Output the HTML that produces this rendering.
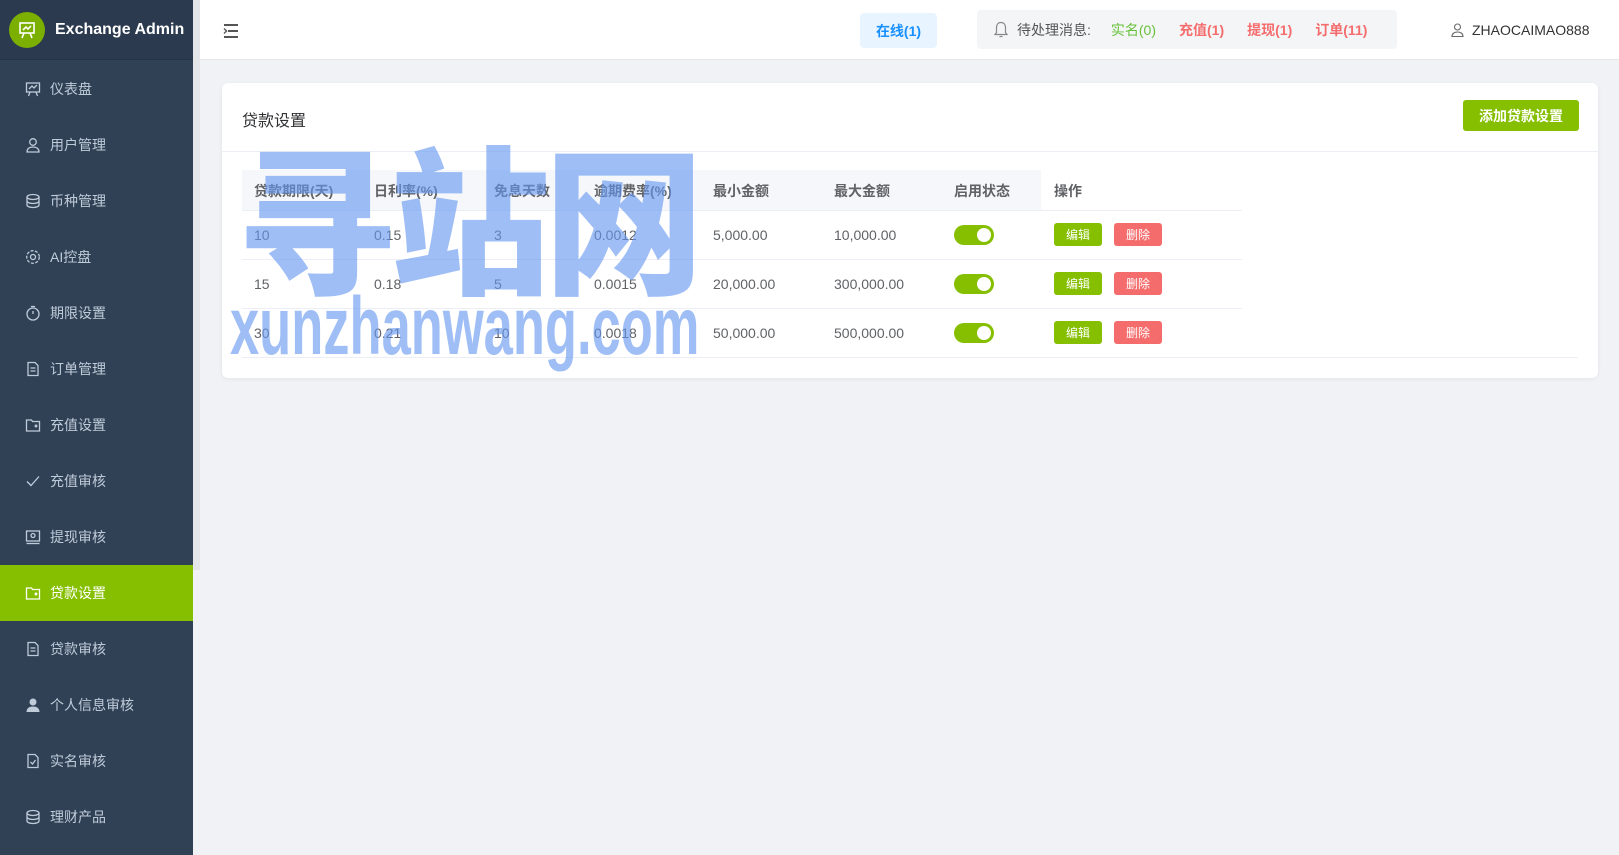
<!DOCTYPE html><html><head><meta charset="utf-8"><style>
*{margin:0;padding:0;box-sizing:border-box}
body{width:1619px;height:855px;overflow:hidden;background:#f0f2f5;font-family:"Liberation Sans","Noto Sans CJK SC",sans-serif;position:relative;font-size:14px;color:#606266}
.side{position:absolute;left:0;top:0;width:193px;height:855px;background:#304156}
.sb{position:absolute;left:193px;top:0;width:7px;height:570px;background:#e4e6ea}
.logo{height:60px;background:#2b3a4e;display:flex;align-items:center;padding-left:9px;border-bottom:1px solid #263344}
.logo .c{width:36px;height:36px;border-radius:50%;background:#7cb000;display:flex;align-items:center;justify-content:center}
.logo b{color:#fff;font-size:16px;margin-left:10px}
.it{position:absolute;left:0;width:193px;height:56px;display:flex;align-items:center;padding-left:25px;color:#bfcbd9;font-size:14px}
.it svg{margin-right:9px}
.it.a{background:#85bf00;color:#fff}
.hd{position:absolute;left:200px;top:0;width:1419px;height:60px;background:#fff;border-bottom:1px solid #e6e6e6}
.card{position:absolute;left:222px;top:83px;width:1376px;height:295px;background:#fff;border-radius:6px;box-shadow:0 1px 4px rgba(0,0,0,.06)}
.th{position:absolute;top:87px;height:40px;background:#f5f7fa}
.cell{position:absolute;font-size:14px}
.hl{position:absolute;height:1px;background:#ebeef5}
.sw{position:absolute;width:40px;height:20px;border-radius:10px;background:#85bf00}
.sw:after{content:"";position:absolute;right:3px;top:3px;width:14px;height:14px;border-radius:50%;background:#fff}
.bt{position:absolute;width:48px;height:23px;border-radius:3px;color:#fff;font-size:12px;display:flex;align-items:center;justify-content:center}
.wm{position:absolute;color:rgba(100,150,240,.62);font-weight:bold;pointer-events:none;white-space:nowrap}
</style></head><body>
<div class="side">
<div class="logo"><div class="c"><svg width="20" height="20" viewBox="0 0 20 20" fill="none" stroke="#fff" stroke-width="1.6"><rect x="3" y="3" width="14" height="10"/><path d="M6 10l3-3 2 2 3-3M7 13l-2 5M13 13l2 5"/></svg></div><b>Exchange Admin</b></div>
</div>
<div class="sb"></div>
<div class="it" style="top:61px"><svg width="16" height="16" viewBox="0 0 16 16" fill="none" stroke="#bfcbd9" stroke-width="1.3"><rect x="1.5" y="2" width="13" height="9"/><path d="M4 8l3-3 2 2 3-3M5 11l-1.5 4M11 11l1.5 4"/></svg>仪表盘</div>
<div class="it" style="top:117px"><svg width="16" height="16" viewBox="0 0 16 16" fill="none" stroke="#bfcbd9" stroke-width="1.3"><circle cx="8" cy="5" r="3.3"/><path d="M2 15c0-3.5 2.7-5 6-5s6 1.5 6 5z"/></svg>用户管理</div>
<div class="it" style="top:173px"><svg width="16" height="16" viewBox="0 0 16 16" fill="none" stroke="#bfcbd9" stroke-width="1.3"><ellipse cx="8" cy="4" rx="6" ry="2.5"/><path d="M2 4v8c0 1.4 2.7 2.5 6 2.5s6-1.1 6-2.5V4M2 8c0 1.4 2.7 2.5 6 2.5S14 9.4 14 8"/></svg>币种管理</div>
<div class="it" style="top:229px"><svg width="16" height="16" viewBox="0 0 16 16" fill="none" stroke="#bfcbd9" stroke-width="1.3"><circle cx="8" cy="8" r="2.5"/><circle cx="8" cy="8" r="6.3" stroke-dasharray="3 1.5"/></svg>AI控盘</div>
<div class="it" style="top:285px"><svg width="16" height="16" viewBox="0 0 16 16" fill="none" stroke="#bfcbd9" stroke-width="1.3"><circle cx="8" cy="9" r="6"/><path d="M8 9V6M6 1.5h4"/></svg>期限设置</div>
<div class="it" style="top:341px"><svg width="16" height="16" viewBox="0 0 16 16" fill="none" stroke="#bfcbd9" stroke-width="1.3"><path d="M3 1.5h7l3 3v10H3zM5.5 7h5M5.5 10h5"/></svg>订单管理</div>
<div class="it" style="top:397px"><svg width="16" height="16" viewBox="0 0 16 16" fill="none" stroke="#bfcbd9" stroke-width="1.3"><path d="M1.5 3h5l1 1.5h7V14h-13z"/><circle cx="11" cy="9" r=".8"/></svg>充值设置</div>
<div class="it" style="top:453px"><svg width="16" height="16" viewBox="0 0 16 16" fill="none" stroke="#bfcbd9" stroke-width="1.3"><path d="M2 8.5l4 4 8-9"/></svg>充值审核</div>
<div class="it" style="top:509px"><svg width="16" height="16" viewBox="0 0 16 16" fill="none" stroke="#bfcbd9" stroke-width="1.3"><rect x="1.5" y="2" width="13" height="10"/><circle cx="8" cy="6.5" r="2"/><path d="M1.5 14.5h13"/></svg>提现审核</div>
<div class="it a" style="top:565px"><svg width="16" height="16" viewBox="0 0 16 16" fill="none" stroke="#fff" stroke-width="1.3"><path d="M1.5 3h5l1 1.5h7V14h-13z"/><circle cx="11" cy="9" r=".8"/></svg>贷款设置</div>
<div class="it" style="top:621px"><svg width="16" height="16" viewBox="0 0 16 16" fill="none" stroke="#bfcbd9" stroke-width="1.3"><path d="M3 1.5h7l3 3v10H3zM5.5 7h5M5.5 10h5"/></svg>贷款审核</div>
<div class="it" style="top:677px"><svg width="16" height="16" viewBox="0 0 16 16" fill="#bfcbd9"><circle cx="8" cy="5" r="3.5"/><path d="M1.5 15c0-4 3-5.5 6.5-5.5s6.5 1.5 6.5 5.5z"/></svg>个人信息审核</div>
<div class="it" style="top:733px"><svg width="16" height="16" viewBox="0 0 16 16" fill="none" stroke="#bfcbd9" stroke-width="1.3"><path d="M3 1.5h7l3 3v10H3zM5.5 9l2 2 3-4"/></svg>实名审核</div>
<div class="it" style="top:789px"><svg width="16" height="16" viewBox="0 0 16 16" fill="none" stroke="#bfcbd9" stroke-width="1.3"><ellipse cx="8" cy="4" rx="6" ry="2.5"/><path d="M2 4v8c0 1.4 2.7 2.5 6 2.5s6-1.1 6-2.5V4M2 8c0 1.4 2.7 2.5 6 2.5S14 9.4 14 8"/></svg>理财产品</div>

<div class="hd">
<svg style="position:absolute;left:23px;top:24px" width="16" height="14" viewBox="0 0 16 14" fill="none" stroke="#555" stroke-width="2"><path d="M1 1h14M5 7h10M1 13h14"/><path d="M1 4.5l2.5 2.5L1 9.5" stroke-width="1.4"/></svg>
<div style="position:absolute;left:660px;top:13px;width:77px;height:35px;background:#e8f4ff;border-radius:4px;color:#1890ff;font-size:14px;font-weight:bold;display:flex;align-items:center;justify-content:center">在线(1)</div>
<div style="position:absolute;left:777px;top:10px;width:420px;height:39px;background:#f4f5f7;border-radius:4px;display:flex;align-items:center;font-size:14px">
<svg style="margin-left:17px;margin-right:9px" width="14" height="17" viewBox="0 0 14 17" fill="none" stroke="#888" stroke-width="1.2"><path d="M7 1.5c-3 0-4.5 2.3-4.5 5v5L1 13.5h12L11.5 11.5v-5C11.5 3.8 10 1.5 7 1.5zM5.5 15.5h3"/></svg>
<span style="color:#555">待处理消息:</span><span style="color:#67c23a;margin-left:20px">实名(0)</span><span style="color:#f56c6c;margin-left:23px;font-weight:bold">充值(1)</span><span style="color:#f56c6c;margin-left:23px;font-weight:bold">提现(1)</span><span style="color:#f56c6c;margin-left:23px;font-weight:bold">订单(11)</span></div>
<div style="position:absolute;left:1251px;top:22px;display:flex;align-items:center;color:#333;font-size:14px"><svg width="13" height="14" viewBox="0 0 13 14" fill="none" stroke="#666" stroke-width="1.1"><circle cx="6.5" cy="4" r="3"/><path d="M1 13.5c0-3 2.5-4.5 5.5-4.5s5.5 1.5 5.5 4.5z"/></svg><span style="margin-left:8px">ZHAOCAIMAO888</span></div>
</div>

<div class="card">
<div style="position:absolute;left:20px;top:24px;font-size:16px;color:#303133">贷款设置</div>
<div style="position:absolute;left:1241px;top:17px;width:116px;height:31px;background:#85bf00;border-radius:3px;color:#fff;font-size:14px;display:flex;align-items:center;justify-content:center;font-weight:bold">添加贷款设置</div>
<div class="hl" style="left:0;top:68px;width:1376px"></div>
<div class="th" style="left:20px;width:799px"></div>
<div class="hl" style="left:20px;top:127px;width:1000px"></div>
<div class="hl" style="left:20px;top:176px;width:1000px"></div>
<div class="hl" style="left:20px;top:225px;width:1000px"></div>
<div class="hl" style="left:20px;top:274px;width:1336px"></div>
<div style="font-weight:bold;color:#606266">
<div class="cell" style="left:32px;top:98px">贷款期限(天)</div><div class="cell" style="left:152px;top:98px">日利率(%)</div><div class="cell" style="left:272px;top:98px">免息天数</div><div class="cell" style="left:372px;top:98px">逾期费率(%)</div><div class="cell" style="left:491px;top:98px">最小金额</div><div class="cell" style="left:612px;top:98px">最大金额</div><div class="cell" style="left:732px;top:98px">启用状态</div><div class="cell" style="left:832px;top:98px">操作</div></div>
<div class="cell" style="left:32px;top:144px">10</div><div class="cell" style="left:152px;top:144px">0.15</div><div class="cell" style="left:272px;top:144px">3</div><div class="cell" style="left:372px;top:144px">0.0012</div><div class="cell" style="left:491px;top:144px">5,000.00</div><div class="cell" style="left:612px;top:144px">10,000.00</div>
<div class="sw" style="left:732px;top:142px"></div><div class="bt" style="left:832px;top:140px;background:#85bf00">编辑</div><div class="bt" style="left:892px;top:140px;background:#f56c6c">删除</div>
<div class="cell" style="left:32px;top:193px">15</div><div class="cell" style="left:152px;top:193px">0.18</div><div class="cell" style="left:272px;top:193px">5</div><div class="cell" style="left:372px;top:193px">0.0015</div><div class="cell" style="left:491px;top:193px">20,000.00</div><div class="cell" style="left:612px;top:193px">300,000.00</div>
<div class="sw" style="left:732px;top:191px"></div><div class="bt" style="left:832px;top:189px;background:#85bf00">编辑</div><div class="bt" style="left:892px;top:189px;background:#f56c6c">删除</div>
<div class="cell" style="left:32px;top:242px">30</div><div class="cell" style="left:152px;top:242px">0.21</div><div class="cell" style="left:272px;top:242px">10</div><div class="cell" style="left:372px;top:242px">0.0018</div><div class="cell" style="left:491px;top:242px">50,000.00</div><div class="cell" style="left:612px;top:242px">500,000.00</div>
<div class="sw" style="left:732px;top:240px"></div><div class="bt" style="left:832px;top:238px;background:#85bf00">编辑</div><div class="bt" style="left:892px;top:238px;background:#f56c6c">删除</div>
</div>
<div class="wm" style="left:236px;top:128px;font-size:160px;line-height:170px;font-family:'Noto Sans CJK SC',sans-serif;font-weight:900;letter-spacing:-6px">寻站网</div>
<div class="wm" style="left:230px;top:282px;font-size:82px;line-height:90px;font-family:'Liberation Sans Narrow','Liberation Sans',sans-serif;transform:scaleX(.64);transform-origin:left">xunzhanwang.com</div>
</body></html>
